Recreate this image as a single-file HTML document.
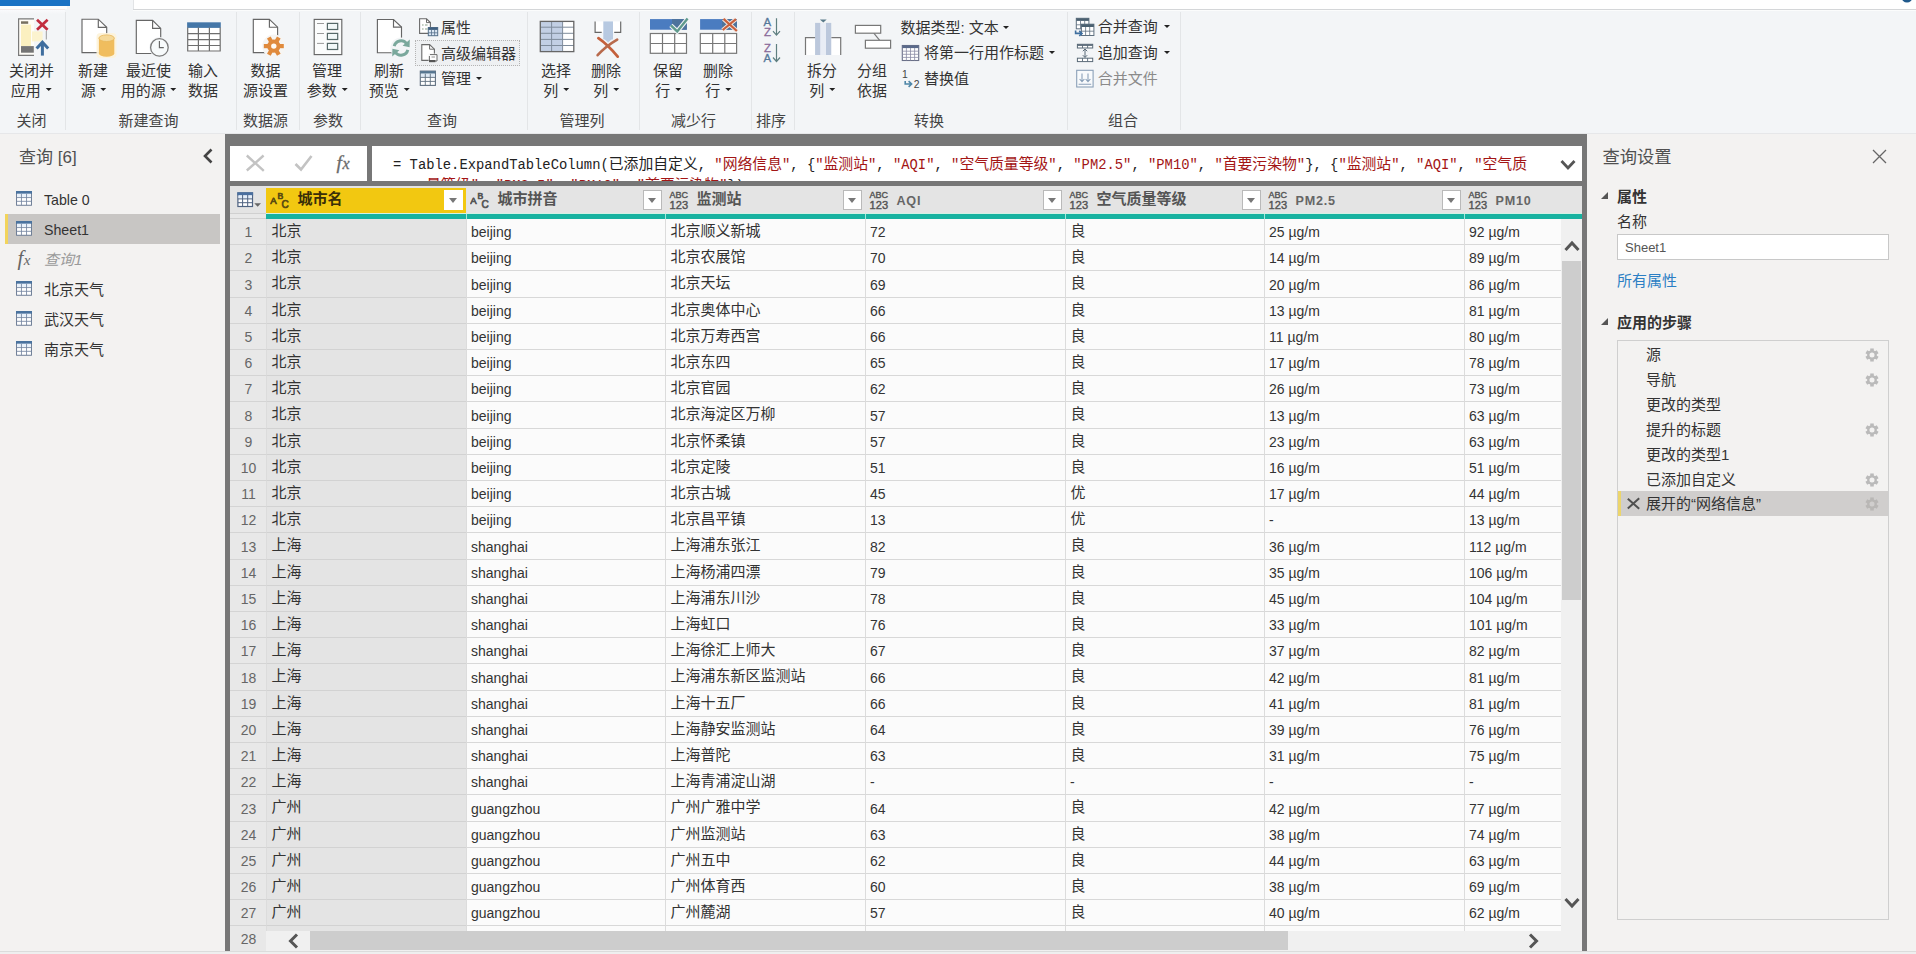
<!DOCTYPE html>
<html lang="zh-CN">
<head>
<meta charset="utf-8">
<title>Power Query 编辑器</title>
<style>
*{box-sizing:border-box;margin:0;padding:0}
html,body{width:1916px;height:954px;overflow:hidden;background:#f3f2f1}
body{font-family:"Liberation Sans","Noto Sans CJK SC",sans-serif;color:#333;font-size:15px}
#app{position:relative;width:1916px;height:954px;overflow:hidden;background:#f3f2f1}
.abs{position:absolute}
/* ribbon */
#ribbon{position:absolute;left:0;top:0;width:1916px;height:134px;background:#f3f5f7}
#ribbon .topblue{position:absolute;left:0;top:0;width:70px;height:5.5px;background:#1b72c4}
#ribbon .topblue2{position:absolute;left:0;top:5.5px;width:67px;height:3.5px;background:#fdfdfe}
#ribbon .topblue3{position:absolute;left:0;top:9px;width:65px;height:1px;background:#f3eaea}
#ribbon .topblue4{position:absolute;left:0;top:10px;width:65px;height:4px;background:linear-gradient(#f9fafc,#f3f5f7)}
#ribbon .topwhite{position:absolute;left:134px;top:0;width:1782px;height:9px;background:#fff}
#ribbon .topline{position:absolute;left:133px;top:9px;width:1783px;height:1px;background:#d4d6d8}
#ribbon .topleft{position:absolute;left:133px;top:0;width:1px;height:9px;background:#e2e4e6}
#ribbon .topline2{position:absolute;left:133px;top:10px;width:1783px;height:1px;background:#fbfcfc}
#ribbon .botline{position:absolute;left:0;top:133px;width:1916px;height:1px;background:#e6e7e9}
.sep{position:absolute;top:12px;width:1px;height:118px;background:#e3e5e7}
.rt{margin-top:.5px;position:absolute;font-size:15px;line-height:20px;color:#333;white-space:nowrap;transform:translateX(-50%);text-align:center}
.gl{position:absolute;top:110.5px;font-size:15px;line-height:20px;color:#444;white-space:nowrap;transform:translateX(-50%)}
.st{margin-top:.4px;position:absolute;font-size:15px;line-height:20px;color:#333;white-space:nowrap}
.arr{display:inline-block;width:0;height:0;border-left:3.6px solid transparent;border-right:3.6px solid transparent;border-top:3.8px solid #222;vertical-align:middle;margin-left:4.5px;position:relative;top:-1.6px}
.ico{position:absolute}
/* left panel */
#left{position:absolute;left:0;top:134px;width:225px;height:817px;background:#f3f2f1}
#left .title{position:absolute;left:19px;top:12px;font-size:17px;line-height:24px;color:#505050}
#left .item{position:absolute;left:5px;width:215px;height:30px}
#left .item.sel{background:#c8c6c4}
#left .item.sel:before{content:"";position:absolute;left:0;top:0;width:3px;height:30px;background:#f2d45c}
#left .item .tx{position:absolute;left:39px;top:6px;font-size:15px;line-height:20px;color:#333;white-space:nowrap}
#left .item svg{position:absolute;left:11px;top:6.8px}
#left .item .tx.lat{font-size:14.2px;top:5.5px}
/* center */
#center{position:absolute;left:225px;top:134px;width:1362px;height:817px;background:#777}
#fx1{position:absolute;left:5px;top:12px;width:137px;height:35px;background:#fff}
#fx2{position:absolute;left:147px;top:12px;width:1210px;height:35px;background:#fff;overflow:hidden}
#formula{position:absolute;left:21px;top:9px;width:1150px;font-family:"Liberation Mono","Noto Sans CJK SC",monospace;font-size:13.83px;line-height:21px;color:#222;white-space:pre}
#formula .s{color:#a31515}
#formula .c{font-size:14.84px}
#thead{position:absolute;left:5px;top:52px;width:1352px;height:27.5px;background:#e4e4e4}
#teal{position:absolute;left:41px;top:80px;width:1316px;height:5.2px;background:#17b2a0}
#teala{position:absolute;left:41px;top:79px;width:1316px;height:1px;background:#d3f1e4}
.cl{position:absolute;left:5px;width:36px;height:1px;background:#d0d0d0}
#tbodybg{position:absolute;left:5px;top:79.5px;width:1352px;height:737px;background:#e8e8e8}
.th{position:absolute;top:0;height:27.5px}
.th.sel{background:#f2c811;top:2px;height:25.5px}
.th.sel .nm,.th.sel .ty{margin-top:-2px}
.th.sel .dd{margin-top:-2px}
.th .nm{position:absolute;left:31.5px;top:2.5px;font-size:15px;line-height:20px;font-weight:bold;color:#555;white-space:nowrap}
.th.sel .nm{color:#3a2f08}
.th .nm.lat{font-size:12.6px;letter-spacing:.75px;top:4.5px;color:#666}
.th .dd{position:absolute;right:3px;top:4px;width:19px;height:19.5px;background:#fff;border:1px solid #b9b9b9}
.th.sel .dd{border-color:#fff}
.th .dd:after{content:"";position:absolute;left:4px;top:6.5px;border-left:4.5px solid transparent;border-right:4.5px solid transparent;border-top:5px solid #777}
.th .ty{position:absolute;left:4px;top:4px}
.vsep{position:absolute;top:85px;width:1px;background:#d0d0d0}
#tbody{position:absolute;left:-225px;top:-134px;width:1916px;height:954px;pointer-events:none}
.tr{position:absolute;left:230px;width:1331px;height:26px}
.tr .rn{position:absolute;left:0;top:0;width:36px;height:26px;background:#e8e8e8;border-bottom:1px solid #d4d4d4;font-size:14px;line-height:27px;color:#666;text-align:center;padding-left:1px}
.td{position:absolute;top:0;height:26px;background:#fbfbfb;border-bottom:1px solid #d8d8d8;border-left:1px solid #dcdcdc;margin-left:-230px;font-size:14px;line-height:27px;color:#333;white-space:nowrap;overflow:hidden}
.td.sel{background:#e4e4e4;border-bottom-color:#d2d2d2}
.td span{position:absolute;left:4px;top:-.5px}
.td span.cj{font-size:15px;left:4.5px;top:-2.5px}
/* scrollbars */
#vscroll{position:absolute;left:1336px;top:85px;width:21px;height:712px;background:#f0f0f0}
#vthumb{position:absolute;left:1337px;top:127px;width:19px;height:338.5px;background:#cdcdcd}
#hscroll{position:absolute;left:41px;top:797px;width:1316px;height:20px;background:#f0f0f0}
#hthumb{position:absolute;left:85px;top:797px;width:978px;height:19px;background:#cdcdcd}
/* right panel */
#right{position:absolute;left:1587px;top:134px;width:329px;height:817px;background:#f3f2f1}
#right .title{position:absolute;left:15.5px;top:11px;font-size:17.3px;line-height:24px;color:#505050}
#right .h{position:absolute;left:30px;font-size:15px;line-height:20px;font-weight:bold;color:#333}
#right .tri{position:absolute;left:14px;width:0;height:0;border-left:7px solid transparent;border-bottom:7px solid #555}
#right .lbl{position:absolute;left:30px;font-size:15px;line-height:20px;color:#333}
#right .inp{position:absolute;left:30px;top:100px;width:272px;height:26px;background:#fff;border:1px solid #c8c8c8;font-size:13px;line-height:26px;color:#555;padding-left:7px}
#right .lnk{position:absolute;left:30px;top:137px;font-size:15px;line-height:20px;color:#2b7fc4}
#steps{position:absolute;left:30px;top:206px;width:272px;height:580px;border:1px solid #cfcfcf;background:#f3f2f1}
.step{position:absolute;left:0;width:270px;height:25px}
.step.sel{background:#d0cecd;margin-top:-1px;height:24.5px}
.step.sel:before{content:"";position:absolute;left:0;top:0;width:3px;height:25px;background:#ecd56c}
.step .tx{position:absolute;left:28px;top:2.5px;font-size:15px;line-height:20px;color:#333;white-space:nowrap}
.step svg.gear{position:absolute;left:246.5px;top:5.5px}
#bottomstrip{position:absolute;left:0;top:951px;width:1916px;height:3px;background:#efefef;border-top:1px solid #dcdcdc}

#tealb{position:absolute;left:41px;top:85px;width:1316px;height:1px;background:#c9f2ee}
.tr.last .rn{height:26px;border-bottom:none}
.tr.h27,.tr.h27 .rn,.tr.h27 .td{height:27px}
.tr.h27 .rn{line-height:28px}
.tr.h27 .td{line-height:28px}
.tgap{position:absolute;top:80px;width:1px;height:5.2px;background:#a5e6dc}

</style>
</head>
<body>
<div id="app">
<div id="ribbon">
<div class="topblue"></div><div class="topblue2"></div><div class="topblue3"></div><div class="topblue4"></div>
<div class="topwhite"></div><div class="topleft"></div><div class="topline"></div><div class="topline2"></div>
<svg class="ico" style="left:1898px;top:0" width="18" height="4" viewBox="0 0 18 4"><ellipse cx="9" cy="-3" rx="5.5" ry="5.5" fill="#1f5a8c"/></svg>
<div class="botline"></div>
<div class="sep" style="left:65px"></div>
<div class="sep" style="left:236px"></div>
<div class="sep" style="left:299px"></div>
<div class="sep" style="left:360px"></div>
<div class="sep" style="left:527px"></div>
<div class="sep" style="left:639px"></div>
<div class="sep" style="left:751px"></div>
<div class="sep" style="left:794px"></div>
<div class="sep" style="left:1067px"></div>
<div class="sep" style="left:1180px"></div>

<!-- big button labels -->
<div class="rt" style="left:31.5px;top:60px">关闭并</div><div class="rt" style="left:31px;top:80px">应用<i class="arr"></i></div>
<div class="rt" style="left:93px;top:60px">新建</div><div class="rt" style="left:93.5px;top:80px">源<i class="arr"></i></div>
<div class="rt" style="left:148.5px;top:60px">最近使</div><div class="rt" style="left:148.5px;top:80px">用的源<i class="arr"></i></div>
<div class="rt" style="left:203px;top:60px">输入</div><div class="rt" style="left:203px;top:80px">数据</div>
<div class="rt" style="left:265.5px;top:60px">数据</div><div class="rt" style="left:265.5px;top:80px">源设置</div>
<div class="rt" style="left:327px;top:60px">管理</div><div class="rt" style="left:327px;top:80px">参数<i class="arr"></i></div>
<div class="rt" style="left:389px;top:60px">刷新</div><div class="rt" style="left:389px;top:80px">预览<i class="arr"></i></div>
<div class="rt" style="left:556px;top:60px">选择</div><div class="rt" style="left:556px;top:80px">列<i class="arr"></i></div>
<div class="rt" style="left:606px;top:60px">删除</div><div class="rt" style="left:606px;top:80px">列<i class="arr"></i></div>
<div class="rt" style="left:668px;top:60px">保留</div><div class="rt" style="left:668px;top:80px">行<i class="arr"></i></div>
<div class="rt" style="left:718px;top:60px">删除</div><div class="rt" style="left:718px;top:80px">行<i class="arr"></i></div>
<div class="rt" style="left:822px;top:60px">拆分</div><div class="rt" style="left:822px;top:80px">列<i class="arr"></i></div>
<div class="rt" style="left:872px;top:60px">分组</div><div class="rt" style="left:872px;top:80px">依据</div>

<!-- group labels -->
<div class="gl" style="left:31.5px">关闭</div>
<div class="gl" style="left:148.5px">新建查询</div>
<div class="gl" style="left:265.5px">数据源</div>
<div class="gl" style="left:328px">参数</div>
<div class="gl" style="left:442px">查询</div>
<div class="gl" style="left:582px">管理列</div>
<div class="gl" style="left:693.5px">减少行</div>
<div class="gl" style="left:771px">排序</div>
<div class="gl" style="left:929px">转换</div>
<div class="gl" style="left:1123px">组合</div>

<!-- small buttons -->
<div class="st" style="left:441px;top:17.5px">属性</div>
<div class="abs" style="left:415px;top:40px;width:105px;height:25.5px;border:1px dotted #b4b4b4;background:#eef0f2"></div>
<div class="st" style="left:441px;top:43.5px">高级编辑器</div>
<div class="st" style="left:441px;top:68.5px">管理<i class="arr"></i></div>
<div class="st" style="left:900.5px;top:17.5px">数据类型: 文本<i class="arr"></i></div>
<div class="st" style="left:924px;top:43px">将第一行用作标题<i class="arr"></i></div>
<div class="st" style="left:924px;top:69px">替换值</div>
<div class="st" style="left:1097.7px;top:17px">合并查询<i class="arr" style="margin-left:6px"></i></div>
<div class="st" style="left:1097.7px;top:43px">追加查询<i class="arr" style="margin-left:6px"></i></div>
<div class="st" style="left:1097.7px;top:69px;color:#8a8a8a">合并文件</div>
<svg class="ico" style="left:0;top:0" width="1916" height="134" viewBox="0 0 1916 134" font-family="Liberation Sans, sans-serif">
<!-- 1 close & apply -->
<g>
<rect x="19" y="19.3" width="15" height="35.6" fill="#fffdf7"/>
<rect x="21" y="24.6" width="10" height="21.4" fill="#fbf0c0"/>
<path d="M32 31.4 L42.6 31.4 L42.6 41.4 L32 41.4 Z" fill="#fcf3cf"/>
<path d="M34 18.9 H18.6 V55.3 H34" fill="none" stroke="#7a7a7a" stroke-width="1.2"/>
<path d="M46.3 31 V39.5" stroke="#9a9a9a" stroke-width="1"/>
<rect x="21" y="21.3" width="7.2" height="2.5" fill="#77705f"/>
<rect x="21" y="46.1" width="12.8" height="6.6" fill="#757575"/>
<path d="M37 19.8 L47.6 29.8 M47.6 19.8 L37 29.8" stroke="#c22d3e" stroke-width="2.7" fill="none"/>
<path d="M42.4 55.6 V43" stroke="#3f6e9e" stroke-width="3" fill="none"/>
<path d="M36.6 48.6 L42.4 42.3 L48.2 48.6" stroke="#3f6e9e" stroke-width="3" fill="none"/>
</g>
<!-- 2 new source -->
<g>
<path d="M82 19.2 H98.3 L106.7 27.3 V52.6 H82 Z" fill="#fff" stroke="#666" stroke-width="1.15"/>
<path d="M98.3 19.2 V27.3 H106.7" fill="none" stroke="#666" stroke-width="1.15"/>
<rect x="96.5" y="33" width="20" height="25" rx="4" fill="#fdf3d9" opacity=".9"/>
<path d="M98.9 38.2 V53.5 A7.7 3.3 0 0 0 114.3 53.5 V38.2 Z" fill="#f0bd5e"/>
<ellipse cx="106.6" cy="38.2" rx="7.7" ry="3.3" fill="#f5d99a"/>
<ellipse cx="106.6" cy="38.2" rx="7.7" ry="3.3" fill="none" stroke="#e9b85a" stroke-width=".8"/>
</g>
<!-- 3 recent sources -->
<g>
<path d="M136.3 20.3 H152.6 L160.7 28.4 V53.5 H136.3 Z" fill="#fff" stroke="#666" stroke-width="1.15"/>
<path d="M152.6 20.3 V28.4 H160.7" fill="none" stroke="#666" stroke-width="1.15"/>
<circle cx="159.4" cy="47.4" r="10.3" fill="#f3f5f7"/>
<circle cx="159.4" cy="47.4" r="8.8" fill="#f7fafb" stroke="#7a7a7a" stroke-width="1.3"/>
<path d="M159.4 41 V47.6 H163.8" fill="none" stroke="#666" stroke-width="1.15"/>
</g>
<!-- 4 enter data -->
<g>
<rect x="187.1" y="22.3" width="33.7" height="29.3" fill="#fff"/>
<rect x="187.1" y="22.3" width="33.7" height="5.6" fill="#4577a8"/>
<path d="M187.7 27.5 V51 H220.2 V27.5 M198.4 27.5 V51 M209.4 27.5 V51 M187.7 33.6 H220.2 M187.7 39.6 H220.2 M187.7 45.5 H220.2" fill="none" stroke="#6e6e6e" stroke-width="1.2"/>
</g>
<!-- 5 data source settings -->
<g>
<path d="M253.3 19.4 H269.4 L277.6 27.2 V52.6 H253.3 Z" fill="#fff" stroke="#666" stroke-width="1.15"/>
<path d="M269.4 19.4 V27.2 H277.6" fill="none" stroke="#666" stroke-width="1.15"/>
<circle cx="273.8" cy="46.1" r="11.6" fill="#f6f5f3"/>
<g transform="translate(273.8 46.1) rotate(90)" fill="#e08a3c">
<circle r="6.6"/>
<rect x="-2.1" y="-10" width="4.2" height="20"/>
<rect x="-2.1" y="-10" width="4.2" height="20" transform="rotate(60)"/>
<rect x="-2.1" y="-10" width="4.2" height="20" transform="rotate(120)"/>
<circle r="2.7" fill="#fffaf2"/>
</g>
</g>
<!-- 6 manage parameters -->
<g>
<rect x="314.2" y="19.4" width="27.6" height="35.2" fill="#fbfcfc" stroke="#666" stroke-width="1.15"/>
<rect x="327.4" y="23.4" width="10.3" height="6.1" fill="#f2f8f8" stroke="#566868" stroke-width="1.2"/>
<rect x="327.4" y="33.4" width="10.3" height="6.1" fill="#f2f8f8" stroke="#566868" stroke-width="1.2"/>
<rect x="327.4" y="43.4" width="10.3" height="6.1" fill="#f2f8f8" stroke="#566868" stroke-width="1.2"/>
<path d="M317 23.5 H324 M317 33.5 H324 M317 43.4 H324" stroke="#9a9a9a" stroke-width="1"/>
</g>
<!-- 7 refresh preview -->
<g>
<path d="M377.4 19.5 H393.5 L401.5 27.1 V52.7 H377.4 Z" fill="#fff" stroke="#666" stroke-width="1.15"/>
<path d="M393.5 19.5 V27.1 H401.5" fill="none" stroke="#666" stroke-width="1.15"/>
<circle cx="401" cy="48" r="10.6" fill="#f3f5f7"/>
<g fill="none" stroke="#7aa89c" stroke-width="3">
<path d="M394.2 46.2 A7 7 0 0 1 406.6 43.6"/>
<path d="M407.8 49.8 A7 7 0 0 1 395.4 52.4"/>
</g>
<path d="M409.8 39.6 L409.6 47.2 L402.6 45.8 Z" fill="#7aa89c"/>
<path d="M392.2 56.4 L392.4 48.8 L399.4 50.2 Z" fill="#7aa89c"/>
</g>
<!-- properties small -->
<g>
<path d="M419.6 18.8 H426.5 L430.4 22.6 V33.4 H419.6 Z" fill="#fff" stroke="#6a6a6a" stroke-width="1.1"/>
<path d="M426.5 18.8 V22.6 H430.4" fill="none" stroke="#6a6a6a" stroke-width="1"/>
<path d="M422 25 H423.6 M425 25 H427.6 M422 29 H423.6 M425 29 H427.6" stroke="#8aa08a" stroke-width="1.2"/>
<rect x="428.3" y="27.5" width="9.4" height="8.2" fill="#dbe7f3" stroke="#55708a" stroke-width="1"/>
<rect x="428.3" y="27.5" width="9.4" height="2.4" fill="#3f5f80"/>
<path d="M431.5 29.9 V35.7 M434.6 29.9 V35.7 M428.3 32.8 H437.7" stroke="#55708a" stroke-width=".8"/>
</g>
<!-- advanced editor small -->
<g>
<path d="M421.8 44.6 H429.6 L434.4 49.2 V60.4 H421.8 Z" fill="#fff" stroke="#6a6a6a" stroke-width="1.1"/>
<path d="M429.6 44.6 V49.2 H434.4" fill="none" stroke="#6a6a6a" stroke-width="1"/>
<rect x="428.6" y="53.6" width="8" height="8.4" fill="#f3f3f3"/>
<path d="M430 54.6 H437 V61 H429.4 V56" fill="#fdfdfd" stroke="#6a6a6a" stroke-width="1"/>
<rect x="429" y="60" width="6.4" height="2.2" fill="#555"/>
<path d="M431.5 57 H435" stroke="#777" stroke-width=".8"/>
</g>
<!-- manage small -->
<g>
<rect x="420.3" y="71.1" width="15.1" height="14.3" fill="#fff" stroke="#5f6f7f" stroke-width="1.1"/>
<rect x="420.3" y="71.1" width="15.1" height="2.6" fill="#557590"/>
<rect x="420.9" y="73.7" width="13.9" height="3.6" fill="#dfeaf5"/>
<path d="M425.3 73.7 V85.4 M430.3 73.7 V85.4 M420.3 77.4 H435.4 M420.3 81.4 H435.4" stroke="#5f6f7f" stroke-width=".9"/>
</g>
<!-- 8 choose columns -->
<g>
<rect x="540.3" y="21.4" width="33.5" height="30.2" fill="#fff"/>
<rect x="540.3" y="21.4" width="22.3" height="30.2" fill="#c2cfe4"/>
<path d="M551.6 21.4 V51.6 M562.6 21.4 V51.6 M540.3 27.2 H573.8 M540.3 33.3 H573.8 M540.3 39.4 H573.8 M540.3 45.5 H573.8" stroke="#7f8c9c" stroke-width="1"/>
<rect x="540.3" y="21.4" width="33.5" height="30.2" fill="none" stroke="#666" stroke-width="1.3"/>
</g>
<!-- 9 remove columns -->
<g>
<rect x="595.1" y="21.4" width="25.6" height="11" fill="#fff"/>
<rect x="603.3" y="21.4" width="9.7" height="18" fill="#b7c9e1"/>
<path d="M603.3 38 L608.1 42.5 L613 38 Z" fill="#b7c9e1"/>
<path d="M595.1 21.4 V32.4 H601.7 M614.2 32.4 H620.7 V21.4" fill="none" stroke="#666" stroke-width="1.15"/>
<path d="M598.4 38.2 Q607 44 617.7 56.6" fill="none" stroke="#c4603c" stroke-width="2.8" stroke-linecap="round"/>
<path d="M617.2 39.6 Q606 46 597.6 55.2" fill="none" stroke="#b86a4c" stroke-width="2.6" stroke-linecap="round"/>
</g>
<!-- 10 keep rows -->
<g>
<rect x="650" y="19.1" width="36.8" height="10.6" fill="#4a7cc0"/>
<rect x="672" y="19.1" width="14.8" height="10.6" fill="#4d739c"/>
<rect x="650.3" y="33.5" width="36.2" height="19.8" fill="#fff" stroke="#777" stroke-width="1.2"/>
<path d="M662.5 33.5 V53.3 M674.7 33.5 V53.3 M650.3 43.5 H686.5" stroke="#777" stroke-width="1.2"/>
<path d="M670.9 25.4 L677.2 31.4 L687.6 18.6" fill="none" stroke="#f3f5f7" stroke-width="4.6"/>
<path d="M670.9 25.4 L677.2 31.4 L687.6 18.6" fill="none" stroke="#5f9a8c" stroke-width="2.4"/>
</g>
<!-- 11 remove rows -->
<g>
<rect x="700.1" y="19.1" width="36.8" height="10.6" fill="#4a7cc0"/>
<rect x="722" y="19.1" width="14.9" height="10.6" fill="#4d739c"/>
<rect x="700.3" y="33.5" width="36.3" height="19.8" fill="#fff" stroke="#777" stroke-width="1.2"/>
<path d="M712.7 33.5 V53.3 M724.8 33.5 V53.3 M700.3 43.5 H736.6" stroke="#777" stroke-width="1.2"/>
<path d="M723.5 18.9 L736.9 31 M736 19.1 L722.7 30" fill="none" stroke="#f3e6e0" stroke-width="4.2"/>
<path d="M723.5 18.9 L736.9 31 M736 19.1 L722.7 30" fill="none" stroke="#c8603c" stroke-width="2.2"/>
</g>
<!-- sort -->
<g font-size="11.4" stroke-width=".3">
<text x="763.4" y="26.3" fill="#56789a" stroke="#56789a">A</text>
<text x="764" y="36" fill="#8a6a9a" stroke="#8a6a9a">Z</text>
<path d="M776.5 18.3 V35 M773 31.2 L776.5 35.2 L780 31.2" fill="none" stroke="#5f7f80" stroke-width="1.2"/>
<text x="764" y="51.6" fill="#8a6a9a" stroke="#8a6a9a">Z</text>
<text x="763.4" y="61.5" fill="#56789a" stroke="#56789a">A</text>
<path d="M776.5 44 V61.3 M773 57.5 L776.5 61.5 L780 57.5" fill="none" stroke="#5f7f80" stroke-width="1.2"/>
</g>
<!-- 12 split column -->
<g>
<rect x="805.5" y="37.6" width="35.2" height="17.4" fill="#fff"/>
<rect x="815.1" y="22.9" width="16.1" height="32.1" fill="#e9edf5"/>
<rect x="815.1" y="22.9" width="5.1" height="32.1" fill="#bcc8dc"/>
<rect x="826" y="22.9" width="5.2" height="32.1" fill="#bcc8dc"/>
<path d="M805.5 55 V37.6 H815.1 M831.4 37.6 H840.7 V55" fill="none" stroke="#777" stroke-width="1.2"/>
<path d="M819.9 19.4 H826.7 L823.3 22.6 Z" fill="#5a7a8a"/>
</g>
<!-- 13 group by -->
<g>
<path d="M873.8 33.2 L879.7 40.3" stroke="#777" stroke-width="1.1"/>
<rect x="855.4" y="25.4" width="25.3" height="7.8" fill="#fff" stroke="#777" stroke-width="1.2"/>
<rect x="865.4" y="40.3" width="25.2" height="7.9" fill="#fff" stroke="#777" stroke-width="1.2"/>
</g>
<!-- first row as header -->
<g>
<rect x="902.3" y="45.5" width="16.4" height="15" fill="#fff" stroke="#6a7088" stroke-width="1.1"/>
<rect x="902.3" y="45.5" width="16.4" height="2.6" fill="#5a6a8a"/>
<path d="M906.4 48 V60.5 M910.5 48 V60.5 M914.6 48 V60.5 M902.3 51.2 H918.7 M902.3 54.3 H918.7 M902.3 57.4 H918.7" stroke="#8a8ca4" stroke-width=".8"/>
</g>
<!-- replace values -->
<g font-size="10.4" fill="#444">
<text x="902" y="77.6">1</text>
<text x="913.8" y="87.8">2</text>
<path d="M905.2 81 V84 H911 M908.6 81.2 L911.6 84 L908.6 86.8" fill="none" stroke="#4f86a8" stroke-width="1.6"/>
</g>
<!-- merge queries -->
<g>
<rect x="1076.3" y="18.3" width="12.6" height="10.5" fill="#fff" stroke="#5f7080" stroke-width="1"/>
<rect x="1076.3" y="18.3" width="12.6" height="2.6" fill="#4a6070"/>
<path d="M1080.5 20.9 V28.8 M1084.7 20.9 V28.8 M1076.3 24.8 H1088.9" stroke="#5f7080" stroke-width=".8"/>
<rect x="1081.4" y="24.2" width="12.5" height="11.3" fill="#fff" stroke="#5f7080" stroke-width="1"/>
<rect x="1081.4" y="24.2" width="12.5" height="2.8" fill="#4a6070"/>
<path d="M1085.6 27 V35.5 M1089.7 27 V35.5 M1081.4 31.2 H1093.9" stroke="#5f7080" stroke-width=".8"/>
<path d="M1075.6 30.5 V33.4 H1081.4 M1079.3 30.8 L1082 33.4 L1079.3 36" fill="none" stroke="#3f6f9f" stroke-width="1.6"/>
</g>
<!-- append queries -->
<g>
<rect x="1077.4" y="44.3" width="15.3" height="3.7" fill="#fff" stroke="#5a6a78" stroke-width="1"/>
<rect x="1077.4" y="44.3" width="15.3" height="1.6" fill="#5a6a78"/>
<path d="M1082.5 45 V48 M1087.6 45 V48" stroke="#5a6a78" stroke-width=".9"/>
<rect x="1077.4" y="58.2" width="15.3" height="3.4" fill="#fff" stroke="#5a6a78" stroke-width="1"/>
<path d="M1082.5 58.2 V61.6 M1087.6 58.2 V61.6" stroke="#5a6a78" stroke-width=".9"/>
<path d="M1085 49 V57.4 M1082.8 51.2 L1085 49 L1087.2 51.2 M1082.8 55.2 L1085 57.4 L1087.2 55.2" fill="none" stroke="#5a6a78" stroke-width="1"/>
</g>
<!-- combine files -->
<g>
<rect x="1076.7" y="70.3" width="16.4" height="16.7" fill="#f8fafc" stroke="#8aa0b8" stroke-width="1.1"/>
<path d="M1082 73.6 V81.4 M1079.6 79 L1082 81.6 L1084.4 79 M1088 73.6 V81.4 M1085.6 79 L1088 81.6 L1090.4 79 M1078.6 84.2 H1091.2" fill="none" stroke="#8aa0b8" stroke-width="1.1"/>
</g>
</svg>

</div>

<div id="left">
<div class="title">查询 [6]</div>
<svg class="abs" style="left:202px;top:14px" width="12" height="16" viewBox="0 0 12 16"><path d="M9.5 1.5 L3 8 L9.5 14.5" fill="none" stroke="#444" stroke-width="2.6"/></svg>
<div class="item" style="top:50px"><svg width="16" height="15" viewBox="0 0 17 16" preserveAspectRatio="none"><rect x="0.6" y="0.6" width="15.8" height="14.6" fill="#fff" stroke="#64758f" stroke-width="1"/><rect x="0" y="0" width="17" height="3" fill="#4a739f"/><rect x="1.1" y="3" width="14.8" height="3.6" fill="#eaf2fb"/><path d="M5.8 3 V15 M11.2 3 V15 M0.6 7 H16.4 M0.6 11 H16.4" stroke="#7485a0" stroke-width=".9" fill="none"/></svg><div class="tx lat">Table 0</div></div>
<div class="item sel" style="top:80px"><svg width="16" height="15" viewBox="0 0 17 16" preserveAspectRatio="none"><rect x="0.6" y="0.6" width="15.8" height="14.6" fill="#fff" stroke="#64758f" stroke-width="1"/><rect x="0" y="0" width="17" height="3" fill="#4a739f"/><rect x="1.1" y="3" width="14.8" height="3.6" fill="#eaf2fb"/><path d="M5.8 3 V15 M11.2 3 V15 M0.6 7 H16.4 M0.6 11 H16.4" stroke="#7485a0" stroke-width=".9" fill="none"/></svg><div class="tx lat">Sheet1</div></div>
<div class="item" style="top:110px"><div class="tx" style="left:12.5px;top:3.5px;font-family:'Liberation Serif',serif;font-style:italic;font-size:21px;color:#666;letter-spacing:.5px">f<span style="font-size:15px">x</span></div><div class="tx" style="font-style:italic;color:#9a9a9a">查询1</div></div>
<div class="item" style="top:140px"><svg width="16" height="15" viewBox="0 0 17 16" preserveAspectRatio="none"><rect x="0.6" y="0.6" width="15.8" height="14.6" fill="#fff" stroke="#64758f" stroke-width="1"/><rect x="0" y="0" width="17" height="3" fill="#4a739f"/><rect x="1.1" y="3" width="14.8" height="3.6" fill="#eaf2fb"/><path d="M5.8 3 V15 M11.2 3 V15 M0.6 7 H16.4 M0.6 11 H16.4" stroke="#7485a0" stroke-width=".9" fill="none"/></svg><div class="tx">北京天气</div></div>
<div class="item" style="top:170px"><svg width="16" height="15" viewBox="0 0 17 16" preserveAspectRatio="none"><rect x="0.6" y="0.6" width="15.8" height="14.6" fill="#fff" stroke="#64758f" stroke-width="1"/><rect x="0" y="0" width="17" height="3" fill="#4a739f"/><rect x="1.1" y="3" width="14.8" height="3.6" fill="#eaf2fb"/><path d="M5.8 3 V15 M11.2 3 V15 M0.6 7 H16.4 M0.6 11 H16.4" stroke="#7485a0" stroke-width=".9" fill="none"/></svg><div class="tx">武汉天气</div></div>
<div class="item" style="top:200px"><svg width="16" height="15" viewBox="0 0 17 16" preserveAspectRatio="none"><rect x="0.6" y="0.6" width="15.8" height="14.6" fill="#fff" stroke="#64758f" stroke-width="1"/><rect x="0" y="0" width="17" height="3" fill="#4a739f"/><rect x="1.1" y="3" width="14.8" height="3.6" fill="#eaf2fb"/><path d="M5.8 3 V15 M11.2 3 V15 M0.6 7 H16.4 M0.6 11 H16.4" stroke="#7485a0" stroke-width=".9" fill="none"/></svg><div class="tx">南京天气</div></div>
</div>

<div id="center">
<div id="fx1">
<svg class="abs" style="left:16px;top:8px" width="20" height="18" viewBox="0 0 20 18"><path d="M0.8 1.5 L17.8 16.8 M17.6 1.5 L0.8 16.5" fill="none" stroke="#c3c3c3" stroke-width="2.4"/></svg>
<svg class="abs" style="left:63.5px;top:8px" width="20" height="18" viewBox="0 0 20 18"><path d="M1.5 10 L7 15.5 L17.5 2" fill="none" stroke="#c3c3c3" stroke-width="2.6"/></svg>
<div class="abs" style="left:106.5px;top:4px;font-family:'Liberation Serif',serif;font-style:italic;font-size:19.5px;line-height:26px;letter-spacing:.6px;color:#6a6a6a;-webkit-text-stroke:.3px #6a6a6a">f<span style="font-size:16px">x</span></div>
</div>
<div id="fx2">
<div id="formula">= Table.ExpandTableColumn(<span class="c">已添加自定义</span>, <span class="s">"<span class="c">网络信息</span>"</span>, {<span class="s">"<span class="c">监测站</span>"</span>, <span class="s">"AQI"</span>, <span class="s">"<span class="c">空气质量等级</span>"</span>, <span class="s">"PM2.5"</span>, <span class="s">"PM10"</span>, <span class="s">"<span class="c">首要污染物</span>"</span>}, {<span class="s">"<span class="c">监测站</span>"</span>, <span class="s">"AQI"</span>, <span class="s">"<span class="c">空气质</span></span>
<span class="s">    <span class="c">量等级</span>"</span>, <span class="s">"PM2.5"</span>, <span class="s">"PM10"</span>, <span class="s">"<span class="c">首要污染物</span>"</span>})</div>
<svg class="abs" style="left:1188px;top:13px" width="16" height="12" viewBox="0 0 16 12"><path d="M1.5 2 L8 9 L14.5 2" fill="none" stroke="#555" stroke-width="2.8"/></svg>
</div>
<div id="tbodybg"></div>
<div id="thead">
<div class="th" style="left:0;width:36px"><svg class="abs" style="left:7px;top:6px" width="26" height="16" viewBox="0 0 26 16"><rect x="0.9" y="0.9" width="14.6" height="13.6" fill="#fff" stroke="#4f6382" stroke-width="1.2"/><rect x="0.3" y="0.3" width="15.8" height="3.1" fill="#4a6f9f"/><rect x="1.5" y="3.4" width="13.4" height="3.2" fill="#e3eefa"/><path d="M5.6 3 V14.5 M10.7 3 V14.5 M0.9 6.9 H15.5 M0.9 10.7 H15.5" stroke="#4f6382" stroke-width="1" fill="none"/><path d="M17.3 11.2 H24 L20.65 14.7 Z" fill="#666"/></svg></div>
<div class="th sel" style="left:36px;width:200px"><svg class="ty" width="22" height="20" viewBox="0 0 22 20" font-family="Liberation Sans, sans-serif" fill="#5a4a10" stroke="#5a4a10" stroke-width=".7"><text x="0.2" y="13.8" font-size="9.6">A</text><text x="7.6" y="9.4" font-size="8.6">B</text><text x="11.6" y="17.8" font-size="10">C</text></svg><div class="nm">城市名</div><div class="dd"></div></div>
<div class="th" style="left:236px;width:199px"><svg class="ty" width="22" height="20" viewBox="0 0 22 20" font-family="Liberation Sans, sans-serif" fill="#555" stroke="#555" stroke-width=".7"><text x="0.2" y="13.8" font-size="9.6">A</text><text x="7.6" y="9.4" font-size="8.6">B</text><text x="11.6" y="17.8" font-size="10">C</text></svg><div class="nm">城市拼音</div><div class="dd"></div></div>
<div class="th" style="left:435px;width:200px"><svg class="ty" width="22" height="20" viewBox="0 0 22 20" font-family="Liberation Sans, sans-serif" fill="#555" stroke="#555" stroke-width=".4"><text x="0.6" y="7.8" font-size="8.8" textLength="18.5" lengthAdjust="spacingAndGlyphs">ABC</text><text x="0.6" y="18.9" font-size="10.2" textLength="18.5" lengthAdjust="spacingAndGlyphs">123</text></svg><div class="nm">监测站</div><div class="dd"></div></div>
<div class="th" style="left:635px;width:200px"><svg class="ty" width="22" height="20" viewBox="0 0 22 20" font-family="Liberation Sans, sans-serif" fill="#555" stroke="#555" stroke-width=".4"><text x="0.6" y="7.8" font-size="8.8" textLength="18.5" lengthAdjust="spacingAndGlyphs">ABC</text><text x="0.6" y="18.9" font-size="10.2" textLength="18.5" lengthAdjust="spacingAndGlyphs">123</text></svg><div class="nm lat">AQI</div><div class="dd"></div></div>
<div class="th" style="left:835px;width:199px"><svg class="ty" width="22" height="20" viewBox="0 0 22 20" font-family="Liberation Sans, sans-serif" fill="#555" stroke="#555" stroke-width=".4"><text x="0.6" y="7.8" font-size="8.8" textLength="18.5" lengthAdjust="spacingAndGlyphs">ABC</text><text x="0.6" y="18.9" font-size="10.2" textLength="18.5" lengthAdjust="spacingAndGlyphs">123</text></svg><div class="nm">空气质量等级</div><div class="dd"></div></div>
<div class="th" style="left:1034px;width:200px"><svg class="ty" width="22" height="20" viewBox="0 0 22 20" font-family="Liberation Sans, sans-serif" fill="#555" stroke="#555" stroke-width=".4"><text x="0.6" y="7.8" font-size="8.8" textLength="18.5" lengthAdjust="spacingAndGlyphs">ABC</text><text x="0.6" y="18.9" font-size="10.2" textLength="18.5" lengthAdjust="spacingAndGlyphs">123</text></svg><div class="nm lat">PM2.5</div><div class="dd"></div></div>
<div class="th" style="left:1234px;width:118px"><svg class="ty" width="22" height="20" viewBox="0 0 22 20" font-family="Liberation Sans, sans-serif" fill="#555" stroke="#555" stroke-width=".4"><text x="0.6" y="7.8" font-size="8.8" textLength="18.5" lengthAdjust="spacingAndGlyphs">ABC</text><text x="0.6" y="18.9" font-size="10.2" textLength="18.5" lengthAdjust="spacingAndGlyphs">123</text></svg><div class="nm lat">PM10</div></div>
</div>
<div id="teal"></div><div id="teala"></div><div class="cl" style="top:79px"></div><div class="cl" style="top:84.3px"></div><div id="tealb"></div><div class="tgap" style="left:241px"></div><div class="tgap" style="left:440px"></div><div class="tgap" style="left:640px"></div><div class="tgap" style="left:840px"></div><div class="tgap" style="left:1039px"></div><div class="tgap" style="left:1239px"></div>

<div id="tbody">
<div class="tr h26" style="top:219px">
<div class="rn">1</div>
<div class="td sel" style="left:266px;width:200px"><span class="cj">北京</span></div>
<div class="td" style="left:466px;width:199px"><span>beijing</span></div>
<div class="td" style="left:665px;width:200px"><span class="cj">北京顺义新城</span></div>
<div class="td" style="left:865px;width:200px"><span>72</span></div>
<div class="td" style="left:1065px;width:199px"><span class="cj">良</span></div>
<div class="td" style="left:1264px;width:200px"><span>25 µg/m</span></div>
<div class="td" style="left:1464px;width:97px"><span>92 µg/m</span></div>
</div>
<div class="tr h26" style="top:245px">
<div class="rn">2</div>
<div class="td sel" style="left:266px;width:200px"><span class="cj">北京</span></div>
<div class="td" style="left:466px;width:199px"><span>beijing</span></div>
<div class="td" style="left:665px;width:200px"><span class="cj">北京农展馆</span></div>
<div class="td" style="left:865px;width:200px"><span>70</span></div>
<div class="td" style="left:1065px;width:199px"><span class="cj">良</span></div>
<div class="td" style="left:1264px;width:200px"><span>14 µg/m</span></div>
<div class="td" style="left:1464px;width:97px"><span>89 µg/m</span></div>
</div>
<div class="tr h27" style="top:271px">
<div class="rn">3</div>
<div class="td sel" style="left:266px;width:200px"><span class="cj">北京</span></div>
<div class="td" style="left:466px;width:199px"><span>beijing</span></div>
<div class="td" style="left:665px;width:200px"><span class="cj">北京天坛</span></div>
<div class="td" style="left:865px;width:200px"><span>69</span></div>
<div class="td" style="left:1065px;width:199px"><span class="cj">良</span></div>
<div class="td" style="left:1264px;width:200px"><span>20 µg/m</span></div>
<div class="td" style="left:1464px;width:97px"><span>86 µg/m</span></div>
</div>
<div class="tr h26" style="top:298px">
<div class="rn">4</div>
<div class="td sel" style="left:266px;width:200px"><span class="cj">北京</span></div>
<div class="td" style="left:466px;width:199px"><span>beijing</span></div>
<div class="td" style="left:665px;width:200px"><span class="cj">北京奥体中心</span></div>
<div class="td" style="left:865px;width:200px"><span>66</span></div>
<div class="td" style="left:1065px;width:199px"><span class="cj">良</span></div>
<div class="td" style="left:1264px;width:200px"><span>13 µg/m</span></div>
<div class="td" style="left:1464px;width:97px"><span>81 µg/m</span></div>
</div>
<div class="tr h26" style="top:324px">
<div class="rn">5</div>
<div class="td sel" style="left:266px;width:200px"><span class="cj">北京</span></div>
<div class="td" style="left:466px;width:199px"><span>beijing</span></div>
<div class="td" style="left:665px;width:200px"><span class="cj">北京万寿西宫</span></div>
<div class="td" style="left:865px;width:200px"><span>66</span></div>
<div class="td" style="left:1065px;width:199px"><span class="cj">良</span></div>
<div class="td" style="left:1264px;width:200px"><span>11 µg/m</span></div>
<div class="td" style="left:1464px;width:97px"><span>80 µg/m</span></div>
</div>
<div class="tr h26" style="top:350px">
<div class="rn">6</div>
<div class="td sel" style="left:266px;width:200px"><span class="cj">北京</span></div>
<div class="td" style="left:466px;width:199px"><span>beijing</span></div>
<div class="td" style="left:665px;width:200px"><span class="cj">北京东四</span></div>
<div class="td" style="left:865px;width:200px"><span>65</span></div>
<div class="td" style="left:1065px;width:199px"><span class="cj">良</span></div>
<div class="td" style="left:1264px;width:200px"><span>17 µg/m</span></div>
<div class="td" style="left:1464px;width:97px"><span>78 µg/m</span></div>
</div>
<div class="tr h26" style="top:376px">
<div class="rn">7</div>
<div class="td sel" style="left:266px;width:200px"><span class="cj">北京</span></div>
<div class="td" style="left:466px;width:199px"><span>beijing</span></div>
<div class="td" style="left:665px;width:200px"><span class="cj">北京官园</span></div>
<div class="td" style="left:865px;width:200px"><span>62</span></div>
<div class="td" style="left:1065px;width:199px"><span class="cj">良</span></div>
<div class="td" style="left:1264px;width:200px"><span>26 µg/m</span></div>
<div class="td" style="left:1464px;width:97px"><span>73 µg/m</span></div>
</div>
<div class="tr h27" style="top:402px">
<div class="rn">8</div>
<div class="td sel" style="left:266px;width:200px"><span class="cj">北京</span></div>
<div class="td" style="left:466px;width:199px"><span>beijing</span></div>
<div class="td" style="left:665px;width:200px"><span class="cj">北京海淀区万柳</span></div>
<div class="td" style="left:865px;width:200px"><span>57</span></div>
<div class="td" style="left:1065px;width:199px"><span class="cj">良</span></div>
<div class="td" style="left:1264px;width:200px"><span>13 µg/m</span></div>
<div class="td" style="left:1464px;width:97px"><span>63 µg/m</span></div>
</div>
<div class="tr h26" style="top:429px">
<div class="rn">9</div>
<div class="td sel" style="left:266px;width:200px"><span class="cj">北京</span></div>
<div class="td" style="left:466px;width:199px"><span>beijing</span></div>
<div class="td" style="left:665px;width:200px"><span class="cj">北京怀柔镇</span></div>
<div class="td" style="left:865px;width:200px"><span>57</span></div>
<div class="td" style="left:1065px;width:199px"><span class="cj">良</span></div>
<div class="td" style="left:1264px;width:200px"><span>23 µg/m</span></div>
<div class="td" style="left:1464px;width:97px"><span>63 µg/m</span></div>
</div>
<div class="tr h26" style="top:455px">
<div class="rn">10</div>
<div class="td sel" style="left:266px;width:200px"><span class="cj">北京</span></div>
<div class="td" style="left:466px;width:199px"><span>beijing</span></div>
<div class="td" style="left:665px;width:200px"><span class="cj">北京定陵</span></div>
<div class="td" style="left:865px;width:200px"><span>51</span></div>
<div class="td" style="left:1065px;width:199px"><span class="cj">良</span></div>
<div class="td" style="left:1264px;width:200px"><span>16 µg/m</span></div>
<div class="td" style="left:1464px;width:97px"><span>51 µg/m</span></div>
</div>
<div class="tr h26" style="top:481px">
<div class="rn">11</div>
<div class="td sel" style="left:266px;width:200px"><span class="cj">北京</span></div>
<div class="td" style="left:466px;width:199px"><span>beijing</span></div>
<div class="td" style="left:665px;width:200px"><span class="cj">北京古城</span></div>
<div class="td" style="left:865px;width:200px"><span>45</span></div>
<div class="td" style="left:1065px;width:199px"><span class="cj">优</span></div>
<div class="td" style="left:1264px;width:200px"><span>17 µg/m</span></div>
<div class="td" style="left:1464px;width:97px"><span>44 µg/m</span></div>
</div>
<div class="tr h26" style="top:507px">
<div class="rn">12</div>
<div class="td sel" style="left:266px;width:200px"><span class="cj">北京</span></div>
<div class="td" style="left:466px;width:199px"><span>beijing</span></div>
<div class="td" style="left:665px;width:200px"><span class="cj">北京昌平镇</span></div>
<div class="td" style="left:865px;width:200px"><span>13</span></div>
<div class="td" style="left:1065px;width:199px"><span class="cj">优</span></div>
<div class="td" style="left:1264px;width:200px"><span>-</span></div>
<div class="td" style="left:1464px;width:97px"><span>13 µg/m</span></div>
</div>
<div class="tr h27" style="top:533px">
<div class="rn">13</div>
<div class="td sel" style="left:266px;width:200px"><span class="cj">上海</span></div>
<div class="td" style="left:466px;width:199px"><span>shanghai</span></div>
<div class="td" style="left:665px;width:200px"><span class="cj">上海浦东张江</span></div>
<div class="td" style="left:865px;width:200px"><span>82</span></div>
<div class="td" style="left:1065px;width:199px"><span class="cj">良</span></div>
<div class="td" style="left:1264px;width:200px"><span>36 µg/m</span></div>
<div class="td" style="left:1464px;width:97px"><span>112 µg/m</span></div>
</div>
<div class="tr h26" style="top:560px">
<div class="rn">14</div>
<div class="td sel" style="left:266px;width:200px"><span class="cj">上海</span></div>
<div class="td" style="left:466px;width:199px"><span>shanghai</span></div>
<div class="td" style="left:665px;width:200px"><span class="cj">上海杨浦四漂</span></div>
<div class="td" style="left:865px;width:200px"><span>79</span></div>
<div class="td" style="left:1065px;width:199px"><span class="cj">良</span></div>
<div class="td" style="left:1264px;width:200px"><span>35 µg/m</span></div>
<div class="td" style="left:1464px;width:97px"><span>106 µg/m</span></div>
</div>
<div class="tr h26" style="top:586px">
<div class="rn">15</div>
<div class="td sel" style="left:266px;width:200px"><span class="cj">上海</span></div>
<div class="td" style="left:466px;width:199px"><span>shanghai</span></div>
<div class="td" style="left:665px;width:200px"><span class="cj">上海浦东川沙</span></div>
<div class="td" style="left:865px;width:200px"><span>78</span></div>
<div class="td" style="left:1065px;width:199px"><span class="cj">良</span></div>
<div class="td" style="left:1264px;width:200px"><span>45 µg/m</span></div>
<div class="td" style="left:1464px;width:97px"><span>104 µg/m</span></div>
</div>
<div class="tr h26" style="top:612px">
<div class="rn">16</div>
<div class="td sel" style="left:266px;width:200px"><span class="cj">上海</span></div>
<div class="td" style="left:466px;width:199px"><span>shanghai</span></div>
<div class="td" style="left:665px;width:200px"><span class="cj">上海虹口</span></div>
<div class="td" style="left:865px;width:200px"><span>76</span></div>
<div class="td" style="left:1065px;width:199px"><span class="cj">良</span></div>
<div class="td" style="left:1264px;width:200px"><span>33 µg/m</span></div>
<div class="td" style="left:1464px;width:97px"><span>101 µg/m</span></div>
</div>
<div class="tr h26" style="top:638px">
<div class="rn">17</div>
<div class="td sel" style="left:266px;width:200px"><span class="cj">上海</span></div>
<div class="td" style="left:466px;width:199px"><span>shanghai</span></div>
<div class="td" style="left:665px;width:200px"><span class="cj">上海徐汇上师大</span></div>
<div class="td" style="left:865px;width:200px"><span>67</span></div>
<div class="td" style="left:1065px;width:199px"><span class="cj">良</span></div>
<div class="td" style="left:1264px;width:200px"><span>37 µg/m</span></div>
<div class="td" style="left:1464px;width:97px"><span>82 µg/m</span></div>
</div>
<div class="tr h27" style="top:664px">
<div class="rn">18</div>
<div class="td sel" style="left:266px;width:200px"><span class="cj">上海</span></div>
<div class="td" style="left:466px;width:199px"><span>shanghai</span></div>
<div class="td" style="left:665px;width:200px"><span class="cj">上海浦东新区监测站</span></div>
<div class="td" style="left:865px;width:200px"><span>66</span></div>
<div class="td" style="left:1065px;width:199px"><span class="cj">良</span></div>
<div class="td" style="left:1264px;width:200px"><span>42 µg/m</span></div>
<div class="td" style="left:1464px;width:97px"><span>81 µg/m</span></div>
</div>
<div class="tr h26" style="top:691px">
<div class="rn">19</div>
<div class="td sel" style="left:266px;width:200px"><span class="cj">上海</span></div>
<div class="td" style="left:466px;width:199px"><span>shanghai</span></div>
<div class="td" style="left:665px;width:200px"><span class="cj">上海十五厂</span></div>
<div class="td" style="left:865px;width:200px"><span>66</span></div>
<div class="td" style="left:1065px;width:199px"><span class="cj">良</span></div>
<div class="td" style="left:1264px;width:200px"><span>41 µg/m</span></div>
<div class="td" style="left:1464px;width:97px"><span>81 µg/m</span></div>
</div>
<div class="tr h26" style="top:717px">
<div class="rn">20</div>
<div class="td sel" style="left:266px;width:200px"><span class="cj">上海</span></div>
<div class="td" style="left:466px;width:199px"><span>shanghai</span></div>
<div class="td" style="left:665px;width:200px"><span class="cj">上海静安监测站</span></div>
<div class="td" style="left:865px;width:200px"><span>64</span></div>
<div class="td" style="left:1065px;width:199px"><span class="cj">良</span></div>
<div class="td" style="left:1264px;width:200px"><span>39 µg/m</span></div>
<div class="td" style="left:1464px;width:97px"><span>76 µg/m</span></div>
</div>
<div class="tr h26" style="top:743px">
<div class="rn">21</div>
<div class="td sel" style="left:266px;width:200px"><span class="cj">上海</span></div>
<div class="td" style="left:466px;width:199px"><span>shanghai</span></div>
<div class="td" style="left:665px;width:200px"><span class="cj">上海普陀</span></div>
<div class="td" style="left:865px;width:200px"><span>63</span></div>
<div class="td" style="left:1065px;width:199px"><span class="cj">良</span></div>
<div class="td" style="left:1264px;width:200px"><span>31 µg/m</span></div>
<div class="td" style="left:1464px;width:97px"><span>75 µg/m</span></div>
</div>
<div class="tr h26" style="top:769px">
<div class="rn">22</div>
<div class="td sel" style="left:266px;width:200px"><span class="cj">上海</span></div>
<div class="td" style="left:466px;width:199px"><span>shanghai</span></div>
<div class="td" style="left:665px;width:200px"><span class="cj">上海青浦淀山湖</span></div>
<div class="td" style="left:865px;width:200px"><span>-</span></div>
<div class="td" style="left:1065px;width:199px"><span>-</span></div>
<div class="td" style="left:1264px;width:200px"><span>-</span></div>
<div class="td" style="left:1464px;width:97px"><span>-</span></div>
</div>
<div class="tr h27" style="top:795px">
<div class="rn">23</div>
<div class="td sel" style="left:266px;width:200px"><span class="cj">广州</span></div>
<div class="td" style="left:466px;width:199px"><span>guangzhou</span></div>
<div class="td" style="left:665px;width:200px"><span class="cj">广州广雅中学</span></div>
<div class="td" style="left:865px;width:200px"><span>64</span></div>
<div class="td" style="left:1065px;width:199px"><span class="cj">良</span></div>
<div class="td" style="left:1264px;width:200px"><span>42 µg/m</span></div>
<div class="td" style="left:1464px;width:97px"><span>77 µg/m</span></div>
</div>
<div class="tr h26" style="top:822px">
<div class="rn">24</div>
<div class="td sel" style="left:266px;width:200px"><span class="cj">广州</span></div>
<div class="td" style="left:466px;width:199px"><span>guangzhou</span></div>
<div class="td" style="left:665px;width:200px"><span class="cj">广州监测站</span></div>
<div class="td" style="left:865px;width:200px"><span>63</span></div>
<div class="td" style="left:1065px;width:199px"><span class="cj">良</span></div>
<div class="td" style="left:1264px;width:200px"><span>38 µg/m</span></div>
<div class="td" style="left:1464px;width:97px"><span>74 µg/m</span></div>
</div>
<div class="tr h26" style="top:848px">
<div class="rn">25</div>
<div class="td sel" style="left:266px;width:200px"><span class="cj">广州</span></div>
<div class="td" style="left:466px;width:199px"><span>guangzhou</span></div>
<div class="td" style="left:665px;width:200px"><span class="cj">广州五中</span></div>
<div class="td" style="left:865px;width:200px"><span>62</span></div>
<div class="td" style="left:1065px;width:199px"><span class="cj">良</span></div>
<div class="td" style="left:1264px;width:200px"><span>44 µg/m</span></div>
<div class="td" style="left:1464px;width:97px"><span>63 µg/m</span></div>
</div>
<div class="tr h26" style="top:874px">
<div class="rn">26</div>
<div class="td sel" style="left:266px;width:200px"><span class="cj">广州</span></div>
<div class="td" style="left:466px;width:199px"><span>guangzhou</span></div>
<div class="td" style="left:665px;width:200px"><span class="cj">广州体育西</span></div>
<div class="td" style="left:865px;width:200px"><span>60</span></div>
<div class="td" style="left:1065px;width:199px"><span class="cj">良</span></div>
<div class="td" style="left:1264px;width:200px"><span>38 µg/m</span></div>
<div class="td" style="left:1464px;width:97px"><span>69 µg/m</span></div>
</div>
<div class="tr h26" style="top:900px">
<div class="rn">27</div>
<div class="td sel" style="left:266px;width:200px"><span class="cj">广州</span></div>
<div class="td" style="left:466px;width:199px"><span>guangzhou</span></div>
<div class="td" style="left:665px;width:200px"><span class="cj">广州麓湖</span></div>
<div class="td" style="left:865px;width:200px"><span>57</span></div>
<div class="td" style="left:1065px;width:199px"><span class="cj">良</span></div>
<div class="td" style="left:1264px;width:200px"><span>40 µg/m</span></div>
<div class="td" style="left:1464px;width:97px"><span>62 µg/m</span></div>
</div>
<div class="tr last h26" style="top:926px"><div class="rn">28</div>
<div class="td sel" style="left:266px;width:200px"></div>
<div class="td" style="left:466px;width:199px"></div>
<div class="td" style="left:665px;width:200px"></div>
<div class="td" style="left:865px;width:200px"></div>
<div class="td" style="left:1065px;width:199px"></div>
<div class="td" style="left:1264px;width:200px"></div>
<div class="td" style="left:1464px;width:97px"></div>
</div>
</div>
<div id="vscroll"></div><div id="vthumb"></div>
<svg class="abs" style="left:1339px;top:105px" width="16" height="13" viewBox="0 0 16 13"><path d="M1.5 11 L8 4 L14.5 11" fill="none" stroke="#555" stroke-width="3"/></svg>
<svg class="abs" style="left:1339px;top:763px" width="16" height="13" viewBox="0 0 16 13"><path d="M1.5 2 L8 9 L14.5 2" fill="none" stroke="#555" stroke-width="3"/></svg>
<div id="hscroll"></div><div id="hthumb"></div>
<svg class="abs" style="left:62px;top:799px" width="12" height="16" viewBox="0 0 12 16"><path d="M10 1.5 L3.5 8 L10 14.5" fill="none" stroke="#555" stroke-width="3"/></svg>
<svg class="abs" style="left:1303px;top:799px" width="12" height="16" viewBox="0 0 12 16"><path d="M2 1.5 L8.5 8 L2 14.5" fill="none" stroke="#555" stroke-width="3"/></svg>

</div>
<div id="right">
<div class="title">查询设置</div>
<svg class="abs" style="left:285px;top:15px" width="15" height="15" viewBox="0 0 15 15"><path d="M1 1 L14 14 M14 1 L1 14" fill="none" stroke="#666" stroke-width="1.3"/></svg>
<div class="tri" style="top:58px"></div><div class="h" style="top:52.5px">属性</div>
<div class="lbl" style="top:77.6px">名称</div>
<div class="inp">Sheet1</div>
<div class="lnk">所有属性</div>
<div class="tri" style="top:184px"></div><div class="h" style="top:178.6px">应用的步骤</div>
<div id="steps">
<div class="step" style="top:1px"><div class="tx">源</div><svg class="gear" width="14" height="14" viewBox="-7.5 -7.5 15 15"><g fill="#bababa"><circle r="5.2"/><rect x="-1.9" y="-7" width="3.8" height="14"/><rect x="-1.9" y="-7" width="3.8" height="14" transform="rotate(60)"/><rect x="-1.9" y="-7" width="3.8" height="14" transform="rotate(120)"/></g><circle r="2.7" fill="#f3f2f1"/></svg></div>
<div class="step" style="top:26px"><div class="tx">导航</div><svg class="gear" width="14" height="14" viewBox="-7.5 -7.5 15 15"><g fill="#bababa"><circle r="5.2"/><rect x="-1.9" y="-7" width="3.8" height="14"/><rect x="-1.9" y="-7" width="3.8" height="14" transform="rotate(60)"/><rect x="-1.9" y="-7" width="3.8" height="14" transform="rotate(120)"/></g><circle r="2.7" fill="#f3f2f1"/></svg></div>
<div class="step" style="top:51px"><div class="tx">更改的类型</div></div>
<div class="step" style="top:76px"><div class="tx">提升的标题</div><svg class="gear" width="14" height="14" viewBox="-7.5 -7.5 15 15"><g fill="#bababa"><circle r="5.2"/><rect x="-1.9" y="-7" width="3.8" height="14"/><rect x="-1.9" y="-7" width="3.8" height="14" transform="rotate(60)"/><rect x="-1.9" y="-7" width="3.8" height="14" transform="rotate(120)"/></g><circle r="2.7" fill="#f3f2f1"/></svg></div>
<div class="step" style="top:101px"><div class="tx">更改的类型1</div></div>
<div class="step" style="top:126px"><div class="tx">已添加自定义</div><svg class="gear" width="14" height="14" viewBox="-7.5 -7.5 15 15"><g fill="#bababa"><circle r="5.2"/><rect x="-1.9" y="-7" width="3.8" height="14"/><rect x="-1.9" y="-7" width="3.8" height="14" transform="rotate(60)"/><rect x="-1.9" y="-7" width="3.8" height="14" transform="rotate(120)"/></g><circle r="2.7" fill="#f3f2f1"/></svg></div>
<div class="step sel" style="top:151px"><svg class="abs" style="left:9px;top:6px" width="13" height="13" viewBox="0 0 13 13"><path d="M0.8 1.8 L12.2 11.8 M12.2 1.2 L0.8 11.4" fill="none" stroke="#505050" stroke-width="2"/></svg><div class="tx">展开的“网络信息”</div><svg class="gear" width="14" height="14" viewBox="-7.5 -7.5 15 15"><g fill="#b9b7b5"><circle r="5.2"/><rect x="-1.9" y="-7" width="3.8" height="14"/><rect x="-1.9" y="-7" width="3.8" height="14" transform="rotate(60)"/><rect x="-1.9" y="-7" width="3.8" height="14" transform="rotate(120)"/></g><circle r="2.7" fill="#d0cecd"/></svg></div>
</div>
</div>

<div id="bottomstrip"></div>
</div>
</body>
</html>
